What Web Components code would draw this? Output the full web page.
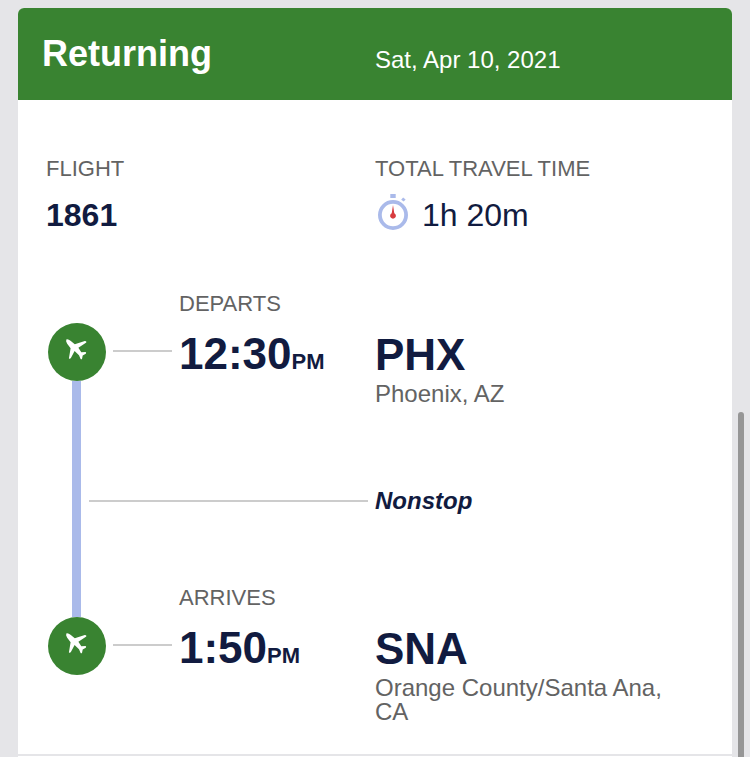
<!DOCTYPE html>
<html lang="en">
<head>
<meta charset="utf-8">
<meta name="viewport" content="width=device-width, initial-scale=1">
<title>Returning flight</title>
<style>
  :root {
    --green: #398331;
    --navy: #111b40;
    --grey: #636363;
    --rail: #aabaea;
    --line: #cccccc;
    --page: #e5e5e8;
  }
  body {
    margin: 0;
    min-height: 100vh;
    box-sizing: border-box;
    padding: 8px 18px 0;
    display: flex;
    flex-direction: column;
    background: var(--page);
    color: var(--navy);
    font-family: "Liberation Sans", Arial, sans-serif;
  }
</style>
</head>
<body>
<flight-card>
  <span slot="title">Returning</span>
  <span slot="date">Sat, Apr 10, 2021</span>
  <flight-facts>
    <span slot="number">1861</span>
    <span slot="duration">1h 20m</span>
  </flight-facts>
  <flight-stop class="first">
    <span slot="label">DEPARTS</span>
    <span slot="time">12:30</span>
    <span slot="period">PM</span>
    <span slot="code">PHX</span>
    <span slot="city">Phoenix, AZ</span>
  </flight-stop>
  <flight-via>Nonstop</flight-via>
  <flight-stop class="last">
    <span slot="label">ARRIVES</span>
    <span slot="time">1:50</span>
    <span slot="period">PM</span>
    <span slot="code">SNA</span>
    <span slot="city">Orange County/Santa Ana, CA</span>
  </flight-stop>
</flight-card>
<next-panel></next-panel>
<scroll-thumb></scroll-thumb>

<script>
function define(name, html) {
  const template = document.createElement("template");
  template.innerHTML = html;
  customElements.define(name, class extends HTMLElement {
    constructor() {
      super();
      this.attachShadow({ mode: "open" }).append(template.content.cloneNode(true));
    }
  });
}

define("flight-card", `
  <style>
    :host { display: block; background: #fff; border-radius: 6px 6px 0 0; overflow: hidden; padding-bottom: 30px; }
    header { display: grid; grid-template-columns: 1fr 1fr; background: var(--green); color: #fff; padding: 28px 0; }
    h2 { margin: 0; padding-left: 24px; font-size: 36px; line-height: 36px; }
    p { margin: 0; padding-top: 12px; font-size: 24px; line-height: 24px; }
  </style>
  <header>
    <h2><slot name="title"></slot></h2>
    <p><slot name="date"></slot></p>
  </header>
  <slot></slot>`);

define("flight-facts", `
  <style>
    :host { display: block; padding: 58px 0 61px; }
    dl { margin: 0; display: grid; grid-template-columns: 1fr 1fr; }
    div:first-child { padding-left: 28px; }
    dt { font-size: 22px; line-height: 22px; color: var(--grey); margin-bottom: 19px; }
    dd { margin: 0; font-size: 32px; line-height: 32px; display: flex; gap: 11px; }
    .number { font-weight: bold; }
    svg { width: 36px; height: 36px; margin: -5px 0 1px; }
  </style>
  <dl>
    <div><dt>FLIGHT</dt><dd class="number"><slot name="number"></slot></dd></div>
    <div><dt>TOTAL TRAVEL TIME</dt><dd>
      <svg viewBox="0 0 36 36" aria-hidden="true">
        <circle cx="18" cy="21" r="13.1" fill="none" stroke="#aabaea" stroke-width="3.8"/>
        <rect x="15.3" y="0" width="5.4" height="4" fill="#aabaea"/>
        <path d="M26.2 5.7L28.1 3.6L30.6 5.5L28.7 7.6Z" fill="#aabaea"/>
        <path d="M18 11l1.3 8.2a2.9 2.9 0 1 1-2.6 0z" fill="#d83b3f"/>
      </svg>
      <slot name="duration"></slot></dd></div>
  </dl>`);

define("flight-stop", `
  <style>
    :host { display: grid; grid-template-columns: 1fr 1fr; }
    .left { display: flex; padding-left: 30px; }
    .track { display: flex; flex-direction: column; width: 58px; }
    .cap { height: 31px; flex: none; }
    .cap, .fill { width: 9px; margin-left: 24px; }
    .fill { flex: 1; }
    :host(.first) .fill, :host(.last) .cap { background: var(--rail); }
    svg { display: block; width: 58px; height: 58px; flex: none; }
    .rule { width: 59px; height: 2px; margin: 58px 7px 0; background: var(--line); flex: none; }
    .when { padding-top: 1px; }
    .label { font-size: 22px; line-height: 22px; color: var(--grey); margin-bottom: 17px; }
    .time { font-size: 44px; line-height: 44px; font-weight: bold; white-space: nowrap; }
    .time small { font-size: 22px; line-height: 22px; }
    .place { padding: 41px 50px 0 0; }
    :host(.first) .place { padding-bottom: 83px; }
    h3 { margin: 0 0 5px; font-size: 44px; line-height: 44px; }
    p { margin: 0; font-size: 24px; line-height: 24px; color: var(--grey); }
  </style>
  <div class="left">
    <div class="track">
      <div class="cap"></div>
      <svg viewBox="0 0 58 58" aria-hidden="true">
        <circle cx="29" cy="29" r="29" fill="#398331"/>
        <path d="M18.3 16.4Q20.3 15.8 22.5 17.8L26.8 21.3 36.8 17.9Q38.9 17.8 38.3 19.6L30.4 24.8 33.3 29.2 37.6 29Q38.6 29.6 37.8 30.8L34.7 32.4 34 36Q33.3 36.6 32.6 36L31 32.2 26.6 28 22.9 35Q22 36 20.9 35.4L22.6 25.2 19.2 20.8Q17.6 18 18.3 16.4Z" fill="#fff"/>
      </svg>
      <div class="fill"></div>
    </div>
    <div class="rule"></div>
    <div class="when">
      <div class="label"><slot name="label"></slot></div>
      <div class="time"><slot name="time"></slot><small><slot name="period"></slot></small></div>
    </div>
  </div>
  <div class="place">
    <h3><slot name="code"></slot></h3>
    <p><slot name="city"></slot></p>
  </div>`);

define("flight-via", `
  <style>
    :host { display: grid; grid-template-columns: 1fr 1fr; font-size: 24px; line-height: 24px; font-weight: bold; font-style: italic; }
    .left { display: flex; gap: 8px; padding: 0 7px 0 54px; }
    .bar { width: 9px; height: 97px; background: var(--rail); }
    .rule { flex: 1; height: 2px; margin-top: 11px; background: var(--line); }
  </style>
  <div class="left"><div class="bar"></div><div class="rule"></div></div>
  <div><slot></slot></div>`);

define("next-panel", `<style>:host { display: block; flex: 1; background: #fff; margin-top: 2px; }</style>`);

define("scroll-thumb", `<style>:host { position: fixed; right: 6px; top: 412px; bottom: -6px; width: 6px; border-radius: 3px; background: #969696; }</style>`);
</script>
</body>
</html>
